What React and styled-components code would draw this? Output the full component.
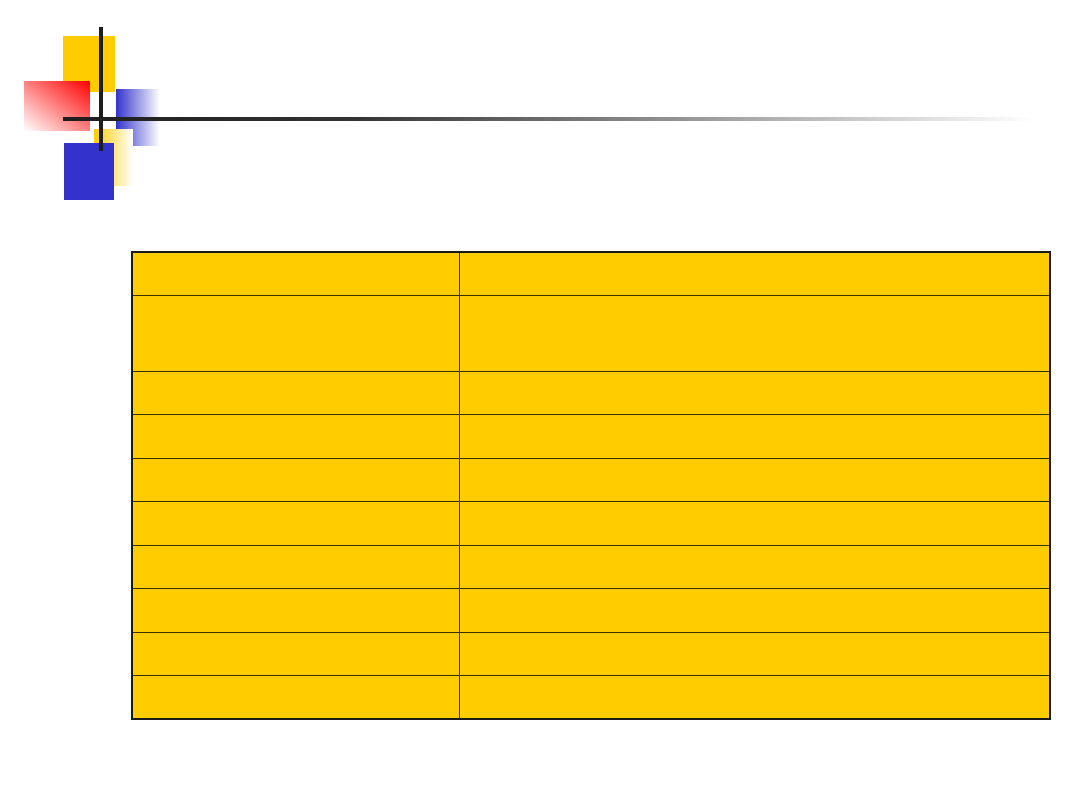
import React from 'react';
import styled, { createGlobalStyle } from 'styled-components';

const GlobalStyle = createGlobalStyle`
    html, body {
        margin: 0;
        padding: 0;
        background: #ffffff;
        font-family: "Liberation Sans", Arial, sans-serif;
    }
`;

const Slide = styled.div`
    width: 1080px;
    height: 810px;
    background: #ffffff;
    display: flex;
    flex-direction: column;
    overflow: hidden;
`;

const Decoration = styled.svg`
    display: block;
    width: 1080px;
    height: 210px;
    flex-shrink: 0;
`;

const TableArea = styled.div`
    padding: 41px 0 0 131px;
`;

const Table = styled.table`
    width: 920px;
    border-collapse: collapse;
    border: 2px solid #1a1a1a;
    background: #ffcc00;
`;

const Cell = styled.td`
    height: ${props => props.$h}px;
    padding: 0;
    border: 1px solid #3a3000;
    width: ${props => (props.$first ? '326px' : 'auto')};
`;

// row heights of the grid lines in the slide
const rowHeights = [42, 75, 42, 43, 42, 43, 42, 43, 42, 42];

const Logo = () => (
    <Decoration viewBox="0 0 1080 210">
        <defs>
            <linearGradient id="redFade" x1="1" y1="0" x2="0" y2="1">
                <stop offset="0" stopColor="#ff0000" />
                <stop offset="1" stopColor="#ffffff" />
            </linearGradient>
            <linearGradient id="blueFade" x1="0" y1="0" x2="1" y2="0">
                <stop offset="0" stopColor="#3333cc" />
                <stop offset="1" stopColor="#ffffff" />
            </linearGradient>
            <linearGradient id="yellowFade" x1="0" y1="0" x2="1" y2="0">
                <stop offset="0" stopColor="#ffcc00" />
                <stop offset="1" stopColor="#ffffff" />
            </linearGradient>
            <linearGradient id="lineFade" x1="0" y1="0" x2="1" y2="0">
                <stop offset="0" stopColor="#1e1e1e" />
                <stop offset="0.3" stopColor="#333333" />
                <stop offset="1" stopColor="#ffffff" />
            </linearGradient>
        </defs>
        <rect x="63" y="36" width="52" height="56" fill="#ffcc00" />
        <rect x="24" y="81" width="66" height="50" fill="url(#redFade)" />
        <rect x="116" y="89" width="44" height="57" fill="url(#blueFade)" />
        <rect x="94" y="129" width="39" height="57" fill="url(#yellowFade)" />
        <rect x="64" y="143" width="50" height="57" fill="#3333cc" />
        <rect x="63" y="117" width="972" height="4" fill="url(#lineFade)" />
        <rect x="99" y="27" width="4" height="124" fill="#1e1e1e" />
    </Decoration>
);

export default function App() {
    return (
        <>
            <GlobalStyle />
            <Slide>
                <Logo />
                <TableArea>
                    <Table>
                        <tbody>
                            {rowHeights.map((h, i) => (
                                <tr key={i}>
                                    <Cell $h={h} $first />
                                    <Cell $h={h} />
                                </tr>
                            ))}
                        </tbody>
                    </Table>
                </TableArea>
            </Slide>
        </>
    );
}
